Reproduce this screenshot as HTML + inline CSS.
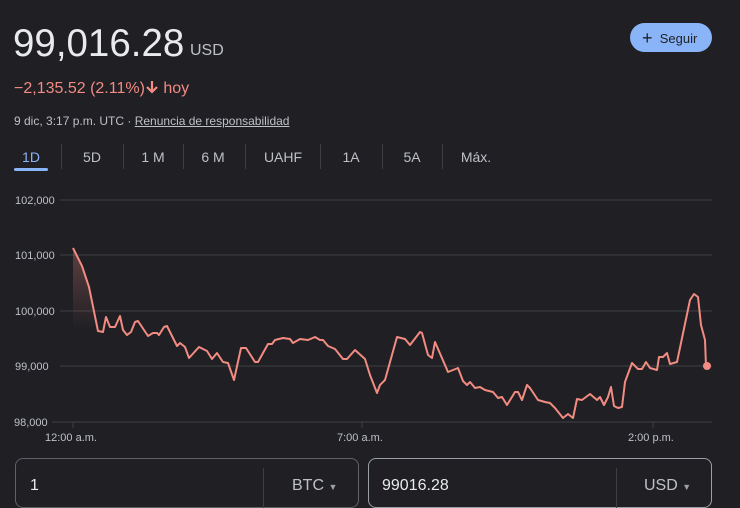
<!DOCTYPE html>
<html><head><meta charset="utf-8"><style>
*{margin:0;padding:0;box-sizing:border-box}
body{width:740px;height:499px;overflow:hidden;background:#1f1f24;font-family:"Liberation Sans",Arial,sans-serif;position:relative;color:#e8eaed}
.a{position:absolute;white-space:nowrap}
.tab{position:absolute;top:149px;font-size:14px;color:#bdc1c6;transform:translateX(-50%)}
.sep{position:absolute;top:144px;width:1px;height:25px;background:#3c4043}
.box{position:absolute;top:458px;height:50px;border:1px solid #5f6368;border-radius:8px}
</style></head><body>
<div class="a" style="left:13px;top:22px;font-size:38.5px;color:#e8eaed">99,016.28</div>
<div class="a" style="left:190px;top:42px;font-size:16px;color:#bdc1c6">USD</div>
<div class="a" style="left:14px;top:80px;font-size:16px;color:#f28b82">−2,135.52 (2.11%)<svg width="14" height="14" viewBox="0 0 14 14" style="vertical-align:-1px"><path d="M7 1v11M2 7l5 5 5-5" stroke="#f28b82" stroke-width="2.2" fill="none"/></svg> hoy</div>
<div class="a" style="left:14px;top:114px;font-size:12px;color:#bdc1c6">9 dic, 3:17 p.m. UTC · <span style="text-decoration:underline">Renuncia de responsabilidad</span></div>
<div class="a" style="left:630px;top:23px;width:82px;height:29px;border-radius:15px;background:#8ab4f8;color:#202124;font-size:13px;line-height:29px;padding-left:12px"><span style="font-size:18px;position:relative;top:1px">+</span>&nbsp; Seguir</div>
<div class="tab" style="left:31px;color:#8ab4f8">1D</div>
<div class="a" style="left:14px;top:168px;width:34px;height:3px;border-radius:2px;background:#8ab4f8"></div>
<div class="sep" style="left:61px"></div><div class="tab" style="left:92px">5D</div>
<div class="sep" style="left:123px"></div><div class="tab" style="left:153px">1 M</div>
<div class="sep" style="left:183px"></div><div class="tab" style="left:213px">6 M</div>
<div class="sep" style="left:245px"></div><div class="tab" style="left:283px">UAHF</div>
<div class="sep" style="left:320px"></div><div class="tab" style="left:351px">1A</div>
<div class="sep" style="left:382px"></div><div class="tab" style="left:412px">5A</div>
<div class="sep" style="left:442px"></div><div class="tab" style="left:476px">Máx.</div>
<svg class="a" style="left:0;top:0" width="740" height="460">
<defs><linearGradient id="g" x1="0" y1="0" x2="0" y2="1"><stop offset="0" stop-color="#f28b82" stop-opacity=".3"/><stop offset="1" stop-color="#f28b82" stop-opacity="0"/></linearGradient></defs>
<g stroke="#3c4043" stroke-width="1">
<line x1="60" y1="200" x2="712" y2="200"/><line x1="60" y1="255" x2="712" y2="255"/><line x1="60" y1="311" x2="712" y2="311"/><line x1="60" y1="366" x2="712" y2="366"/><line x1="52" y1="422" x2="712" y2="422"/>
<line x1="73" y1="422" x2="73" y2="428"/><line x1="362" y1="422" x2="362" y2="428"/><line x1="653" y1="422" x2="653" y2="428"/></g>
<g font-size="11" fill="#bdc1c6" font-family="Liberation Sans,Arial,sans-serif">
<text x="15" y="204">102,000</text><text x="15" y="259">101,000</text><text x="15" y="315">100,000</text><text x="15" y="370">99,000</text><text x="14" y="426">98,000</text>
<text x="45" y="441">12:00 a.m.</text><text x="337" y="441">7:00 a.m.</text><text x="628" y="441">2:00 p.m.</text></g>
<polygon points="73,248 82,266 89,287 98,331 73,331" fill="url(#g)"/>
<polyline fill="none" stroke="#f28b82" stroke-width="2" stroke-linejoin="round" points="73,248 82,266 89,287 98,331 103,332 106,317 110,327 115,327 120,316 123,330 127,335 131,332 135,322 138,321 148,336 153,333 157,333 159,335 164,327 167,326 177,346 180,343 185,347 189,358 199,347 207,351 212,359 217,353 223,362 228,363 234,380 241,348 246,348 255,362 258,362 268,344 272,344 275,340 283,338 290,339 293,343 300,339 308,340 315,337 320,340 323,340 328,346 335,349 343,359 347,359 355,350 365,359 370,375 377,393 380,385 385,380 397,337 405,339 410,345 420,332 422,333 428,355 432,358 435,342 448,372 458,368 463,381 467,385 470,382 475,388 480,387 485,390 493,392 498,398 502,397 507,405 515,392 518,392 522,400 527,385 530,388 538,400 545,402 550,403 555,408 563,418 568,414 573,418 577,399 582,400 590,394 597,400 600,397 604,405 608,397 611,387 614,406 618,408 622,407 625,382 632,363 638,369 642,369 646,362 650,368 657,370 659,357 663,357 667,353 670,364 677,362 690,300 694,294 698,297 701,325 705,340 706,366"/>
<circle cx="707" cy="366" r="4" fill="#f28b82"/>
</svg>
<div class="box" style="left:15px;width:344px"></div>
<div class="a" style="left:263px;top:468px;width:1px;height:40px;background:#3c4043"></div>
<div class="a" style="left:30px;top:477px;font-size:16px">1</div>
<div class="a" style="left:292px;top:477px;font-size:16px;color:#bdc1c6">BTC <span style="font-size:9px;color:#9aa0a6">▼</span></div>
<div class="box" style="left:368px;width:344px;border-color:#9aa0a6"></div>
<div class="a" style="left:616px;top:468px;width:1px;height:40px;background:#3c4043"></div>
<div class="a" style="left:382px;top:477px;font-size:16px">99016.28</div>
<div class="a" style="left:644px;top:477px;font-size:16px;color:#bdc1c6">USD <span style="font-size:9px;color:#9aa0a6">▼</span></div>
</body></html>
